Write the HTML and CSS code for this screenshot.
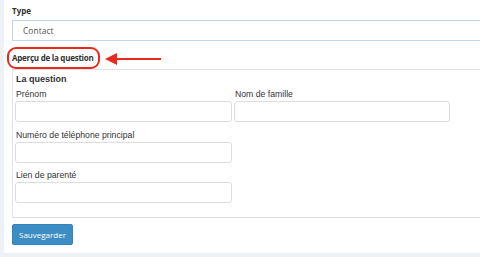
FILE: index.html
```html
<!DOCTYPE html>
<html lang="fr">
<head>
    <meta charset="UTF-8">
    <meta name="viewport" content="width=device-width, initial-scale=1.0">
    <title>Aperçu de la question</title>
    <link rel="stylesheet" href="styles.css">
</head>
<body>
    <div class="panel">
        <label class="field-label" for="type">Type</label>
        <div class="select-box" id="type">Contact</div>

        <div class="preview-head">
            <span class="preview-title">Aperçu de la question</span>
            <svg class="arrow" width="58" height="14" viewBox="0 0 58 14">
                <polygon points="0,7 12,1 12,13" fill="#e8291c"/>
                <rect x="10" y="6" width="46" height="2" fill="#e8291c"/>
            </svg>
        </div>

        <div class="preview">
            <div class="question-title">La question</div>
            <div class="form-grid">
                <div class="form-group">
                    <label for="first_name">Prénom</label>
                    <input type="text" id="first_name">
                </div>
                <div class="form-group">
                    <label for="last_name">Nom de famille</label>
                    <input type="text" id="last_name">
                </div>
                <div class="form-group">
                    <label for="phone">Numéro de téléphone principal</label>
                    <input type="text" id="phone">
                </div>
                <div class="form-group full">
                    <label for="relation">Lien de parenté</label>
                    <input type="text" id="relation">
                </div>
            </div>
        </div>

        <button type="button">Sauvegarder</button>
    </div>
</body>
</html>
```

FILE: styles.css
```css
body {
    margin: 0;
    padding: 0 0 4px 4px;
    background-color: #eef1f6;
    font-family: "Open Sans", sans-serif;
    color: #333;
}
.panel {
    background-color: #fff;
    padding: 5px 0 8px 8px;
    overflow: hidden;
}
.field-label {
    display: block;
    font-weight: bold;
    font-size: 8px;
    line-height: 12px;
    margin-bottom: 3px;
}
.select-box {
    width: 520px;
    height: 19px;
    line-height: 19px;
    border: 1px solid #bfd7ea;
    padding-left: 10px;
    font-size: 8.5px;
    color: #555;
}
.preview-head {
    display: flex;
    align-items: center;
    margin-top: 6px;
}
.preview-title {
    margin-left: -5px;
    height: 18px;
    line-height: 18px;
    padding: 0 4px 0 3px;
    border: 2px solid #e8291c;
    border-radius: 9px;
    font-weight: bold;
    font-size: 8px;
    letter-spacing: -0.25px;
}
.arrow {
    margin-left: 5px;
    margin-top: 1px;
}
.preview {
    width: 520px;
    border: 1px solid #e3e3e3;
    padding: 3px 0 14px 2px;
    font-family: "Liberation Sans", Arial, sans-serif;
}
.question-title {
    font-weight: bold;
    font-size: 9px;
    line-height: 12px;
    padding-left: 1px;
}
.form-grid {
    display: grid;
    grid-template-columns: 217px 216px;
    column-gap: 2px;
    row-gap: 6.5px;
    margin-top: 3px;
}
.form-group.full {
    grid-column: 1;
}
.form-group label {
    display: block;
    font-size: 8.7px;
    line-height: 12px;
    margin-bottom: 1px;
    padding-left: 1px;
}
input {
    display: block;
    width: 100%;
    height: 21px;
    box-sizing: border-box;
    border: 1px solid #ddd;
    border-radius: 3px;
    margin: 0;
}
button {
    margin-top: 6px;
    width: 61px;
    height: 21px;
    padding: 0;
    background-color: #3c8dc4;
    color: #fff;
    border: 1px solid #3685ba;
    border-radius: 2px;
    font-family: "Open Sans", sans-serif;
    font-size: 8px;
    cursor: pointer;
}
```
